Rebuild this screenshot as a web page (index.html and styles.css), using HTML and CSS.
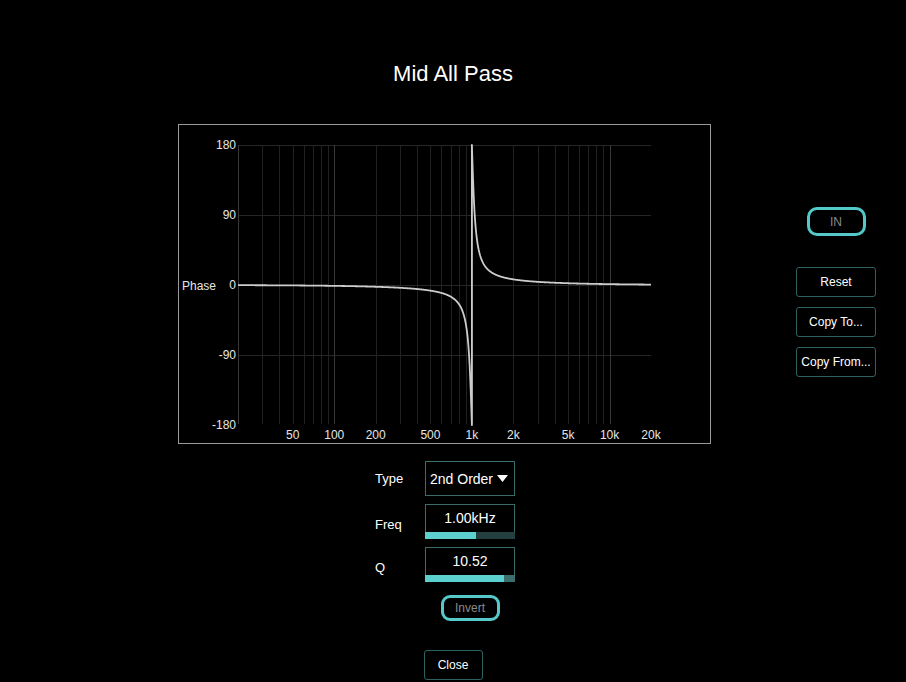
FILE: index.html
```html
<!DOCTYPE html>
<html lang="en">
  <head>
    <meta charset="UTF-8" />
    <title>Mid All Pass</title>
    <link rel="stylesheet" href="styles.css">
  </head>
  <body>
    <div class="dialog">
      <h1 class="title">Mid All Pass</h1>

      <div class="main">
        <div class="graph">
          <svg id="plot" width="531" height="318" viewBox="0 0 531 318">
            <g id="grid"></g>
            <g class="axis-text">
              <text x="57" y="24" text-anchor="end">180</text>
              <text x="57" y="94" text-anchor="end">90</text>
              <text x="57" y="164" text-anchor="end">0</text>
              <text x="57" y="234" text-anchor="end">-90</text>
              <text x="57" y="304" text-anchor="end">-180</text>
              <text x="3" y="165">Phase</text>
            </g>
            <g class="axis-text" id="freqLabels"></g>
            <path id="curve" class="curve" d="" />
          </svg>
        </div>

        <div class="side">
          <button class="pill in-btn">IN</button>
          <button class="btn">Reset</button>
          <button class="btn">Copy To...</button>
          <button class="btn">Copy From...</button>
        </div>
      </div>

      <div class="controls">
        <div class="label">Type</div>
        <div class="select">
          <span>2nd Order</span>
          <svg width="11" height="8" viewBox="0 0 11 8"><path d="M0 0 L11 0 L5.5 7 Z" fill="#fff" /></svg>
        </div>

        <div class="label low">Freq</div>
        <div class="value-box">
          <div class="value">1.00kHz</div>
          <div class="bar freq-bar"><div class="fill" style="width: 57%"></div></div>
        </div>

        <div class="label low">Q</div>
        <div class="value-box">
          <div class="value">10.52</div>
          <div class="bar q-bar"><div class="fill" style="width: 88%"></div></div>
        </div>

        <div></div>
        <div class="invert-cell">
          <button class="pill invert-btn">Invert</button>
        </div>
      </div>

      <div class="footer">
        <button class="btn close-btn">Close</button>
      </div>
    </div>

    <script>
      const NS = "http://www.w3.org/2000/svg";
      const X0 = 59;
      const W = 413;
      const Y0 = 160;

      function xOf(f) {
        return X0 + ((Math.log10(f) - Math.log10(20)) / 3) * W;
      }
      function yOf(p) {
        return Y0 - (p * 140) / 180;
      }

      function line(parent, x1, y1, x2, y2, cls) {
        const l = document.createElementNS(NS, "line");
        l.setAttribute("x1", x1);
        l.setAttribute("y1", y1);
        l.setAttribute("x2", x2);
        l.setAttribute("y2", y2);
        l.setAttribute("class", cls);
        parent.appendChild(l);
      }

      const grid = document.getElementById("grid");

      // horizontal lines
      [180, 90, 0, -90].forEach((p) => {
        line(grid, X0, yOf(p) + 0.5, X0 + W, yOf(p) + 0.5, "grid-h");
      });

      // vertical lines 20 Hz .. 10 kHz
      [10, 100, 1000].forEach((dec) => {
        for (let m = 1; m <= 9; m++) {
          const f = dec * m;
          if (f < 20) continue;
          const x = Math.round(xOf(f)) + 0.5;
          const major = m === 1 || f === 20;
          line(grid, x, 20, x, 299, major ? "grid-major" : "grid-minor");
        }
      });
      const x10k = Math.round(xOf(10000)) + 0.5;
      line(grid, x10k, 20, x10k, 299, "grid-major");

      // frequency labels
      const labels = document.getElementById("freqLabels");
      [
        [50, "50"], [100, "100"], [200, "200"], [500, "500"],
        [1000, "1k"], [2000, "2k"], [5000, "5k"], [10000, "10k"], [20000, "20k"],
      ].forEach(([f, t]) => {
        const el = document.createElementNS(NS, "text");
        el.setAttribute("x", xOf(f));
        el.setAttribute("y", 314);
        el.setAttribute("text-anchor", "middle");
        el.textContent = t;
        labels.appendChild(el);
      });

      // 2nd order all pass phase
      const f0 = 1000;
      const Q = 10.52;
      function phase(f) {
        const w = f / f0;
        return (-2 * Math.atan2(w / Q, 1 - w * w) * 180) / Math.PI;
      }

      let d = "";
      const steps = 1200;
      let jumped = false;
      for (let i = 0; i <= steps; i++) {
        const f = 20 * Math.pow(1000, i / steps);
        if (!jumped && f >= f0) {
          d += `L${xOf(f0).toFixed(2)},${yOf(-180).toFixed(2)} `;
          d += `L${xOf(f0).toFixed(2)},${yOf(180).toFixed(2)} `;
          jumped = true;
        }
        let p = phase(f);
        if (p < -180) p += 360;
        d += (i === 0 ? "M" : "L") + xOf(f).toFixed(2) + "," + yOf(p).toFixed(2) + " ";
      }
      document.getElementById("curve").setAttribute("d", d);
    </script>
  </body>
</html>
```

FILE: styles.css
```css
body {
  margin: 0;
  background: #000;
  color: #fff;
  font-family: "Liberation Sans", Arial, sans-serif;
}

.dialog {
  width: 906px;
  height: 682px;
  overflow: hidden;
}

.title {
  margin: 0;
  padding-top: 62px;
  text-align: center;
  font-size: 22px;
  line-height: 24px;
  font-weight: normal;
}

.main {
  display: flex;
  margin-top: 38px;
  padding-left: 178px;
}

.graph {
  width: 531px;
  height: 318px;
  border: 1px solid #9a9a9a;
}

.graph svg {
  display: block;
}

.axis-text text {
  fill: #e6e6e6;
  font-size: 12px;
  font-family: "Liberation Sans", Arial, sans-serif;
}

.grid-h {
  stroke: #262626;
  stroke-width: 1;
}

.grid-minor {
  stroke: #212121;
  stroke-width: 1;
}

.grid-major {
  stroke: #383838;
  stroke-width: 1;
}

.curve {
  fill: none;
  stroke: #cccccc;
  stroke-width: 1.8;
  stroke-linejoin: round;
}

.side {
  margin-left: 85px;
  padding-top: 83px;
  width: 80px;
  display: flex;
  flex-direction: column;
  align-items: center;
  gap: 10px;
}

button {
  font-family: "Liberation Sans", Arial, sans-serif;
  background: #000;
  cursor: pointer;
  padding: 0;
}

.btn {
  width: 80px;
  height: 30px;
  border: 1px solid #2e6262;
  border-radius: 3px;
  color: #fff;
  font-size: 12px;
}

.pill {
  width: 59px;
  border: 3px solid #55c9c9;
  border-radius: 10px;
  color: #8a8a8a;
  font-size: 12px;
}

.in-btn {
  height: 29px;
  margin-bottom: 21px;
}

.controls {
  display: grid;
  grid-template-columns: 50px 90px;
  row-gap: 8px;
  margin-top: 17px;
  padding-left: 375px;
}

.label {
  font-size: 13px;
  align-self: center;
}

.label.low {
  padding-top: 5px;
}

.select {
  height: 33px;
  border: 1px solid #3a6c6c;
  display: flex;
  align-items: center;
  justify-content: space-between;
  padding: 0 6px 0 4px;
  font-size: 14px;
}

.value-box {
  height: 34px;
  border: 1px solid #3a6c6c;
  border-bottom: none;
  display: flex;
  flex-direction: column;
}

.value {
  flex: 1;
  display: flex;
  align-items: center;
  justify-content: center;
  font-size: 14px;
  padding-bottom: 1px;
}

.bar {
  height: 7px;
  margin: 0 -1px;
  display: flex;
}

.freq-bar {
  background: #233f3f;
}

.q-bar {
  background: #3d6e6e;
}

.fill {
  background: #5ccfcf;
  height: 100%;
}

.invert-cell {
  display: flex;
  justify-content: center;
  margin-top: 5px;
}

.invert-btn {
  height: 26px;
  border-radius: 9px;
}

.footer {
  display: flex;
  justify-content: center;
  margin-top: 29px;
}

.close-btn {
  width: 59px;
}
```
